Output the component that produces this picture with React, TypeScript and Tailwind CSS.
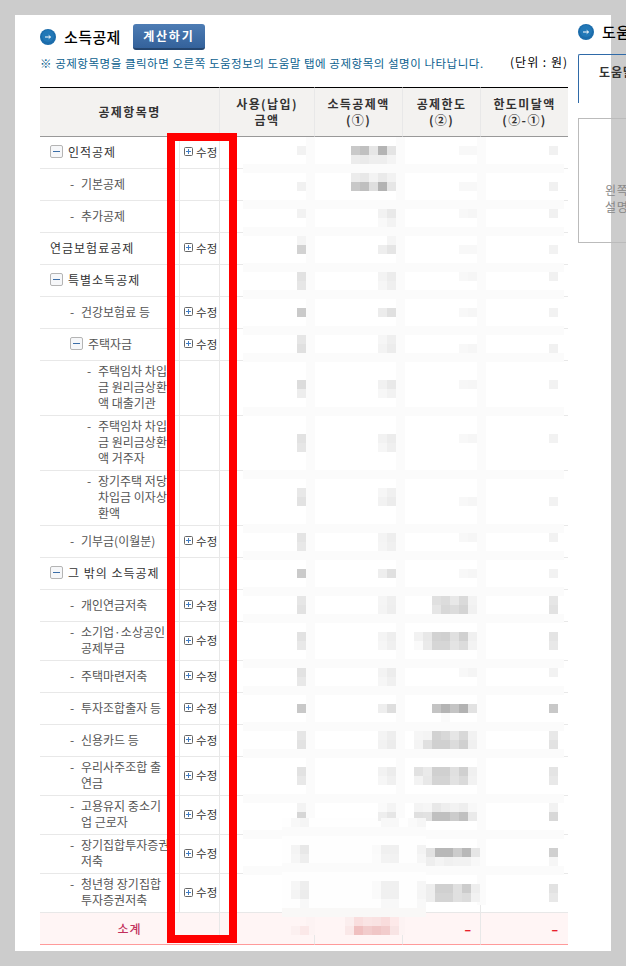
import React from 'react';

interface DeductionRow {
    label: string[];
    level: number;
    toggle?: boolean;
    edit?: boolean;
}

const rows: DeductionRow[] = [
    { label: ['인적공제'], level: 0, toggle: true, edit: true },
    { label: ['기본공제'], level: 1 },
    { label: ['추가공제'], level: 1 },
    { label: ['연금보험료공제'], level: 0, edit: true },
    { label: ['특별소득공제'], level: 0, toggle: true },
    { label: ['건강보험료 등'], level: 1, edit: true },
    { label: ['주택자금'], level: 2, toggle: true, edit: true },
    { label: ['주택임차 차입', '금 원리금상환', '액 대출기관'], level: 3 },
    { label: ['주택임차 차입', '금 원리금상환', '액 거주자'], level: 3 },
    { label: ['장기주택 저당', '차입금 이자상', '환액'], level: 3 },
    { label: ['기부금(이월분)'], level: 1, edit: true },
    { label: ['그 밖의 소득공제'], level: 0, toggle: true },
    { label: ['개인연금저축'], level: 1, edit: true },
    { label: ['소기업·소상공인', '공제부금'], level: 1, edit: true },
    { label: ['주택마련저축'], level: 1, edit: true },
    { label: ['투자조합출자 등'], level: 1, edit: true },
    { label: ['신용카드 등'], level: 1, edit: true },
    { label: ['우리사주조합 출', '연금'], level: 1, edit: true },
    { label: ['고용유지 중소기', '업 근로자'], level: 1, edit: true },
    { label: ['장기집합투자증권', '저축'], level: 1, edit: true },
    { label: ['청년형 장기집합', '투자증권저축'], level: 1, edit: true },
];

const rowHeight: Record<number, string> = { 1: 'h-[32px]', 2: 'h-[39px]', 3: 'h-[55px]' };
const rowIndent: Record<number, string> = { 0: 'pl-[10px]', 1: 'pl-[30px]', 2: 'pl-[30px]', 3: 'pl-[47px]' };

// pixelated part of the screenshot: [y, x, colours] in page coordinates, one 9px block per colour
const mosaic: [number, number, string[]][] = [
    [146, 297, ['f2']], [146, 351, ['c9', 'c0', 'e6', 'b4', 'e4']], [146, 459, ['f8', 'f8']], [146, 549, ['f1']],
    [155, 351, ['ec', 'ea', 'ee', 'ee', 'f4']],
    [173, 351, ['ec', 'e8', 'f3', 'ea', 'f2']],
    [182, 297, ['f1']], [182, 351, ['c8', 'bf', 'df', 'b3', 'e6']], [182, 459, ['f8', 'f8']], [182, 549, ['f1']],
    [209, 297, ['f2']], [209, 378, ['f2', 'e9']], [209, 459, ['f8', 'f6']], [209, 549, ['f1']],
    [218, 378, ['f9', 'f3']],
    [236, 297, ['f4']], [236, 387, ['f5']],
    [245, 297, ['d2']], [245, 378, ['ee', 'e5']], [245, 459, ['f8', 'f8']], [245, 549, ['f2']],
    [272, 297, ['e2']], [272, 378, ['f3', 'ec']], [272, 459, ['f8', 'f6']], [272, 549, ['f1']],
    [281, 297, ['e6']], [281, 378, ['f6', 'ef']],
    [308, 297, ['ca']], [308, 378, ['ec', 'e0']], [308, 459, ['f8', 'f6']], [308, 549, ['f2']],
    [335, 297, ['e6']], [335, 378, ['f6', 'ef']],
    [344, 297, ['e0']], [344, 378, ['f3', 'ec']], [344, 459, ['f8', 'f6']], [344, 549, ['f1']],
    [380, 297, ['dc']], [380, 378, ['f1', 'e9']], [380, 459, ['f7', 'f6']], [380, 549, ['f2']],
    [389, 297, ['ed']], [389, 378, ['f7', 'f2']],
    [434, 297, ['e2']], [434, 378, ['f2', 'ec']], [434, 459, ['f8', 'f6']], [434, 549, ['f2']],
    [443, 297, ['e6']], [443, 378, ['f6', 'ef']],
    [488, 297, ['e8']], [488, 378, ['f6', 'f0']],
    [497, 297, ['e2']], [497, 378, ['f2', 'ec']], [497, 459, ['f8', 'f6']], [497, 549, ['f2']],
    [533, 297, ['e4']], [533, 378, ['f4', 'ee']], [533, 459, ['f8', 'f6']], [533, 549, ['f2']],
    [542, 297, ['e8']], [542, 378, ['f5', 'f0']],
    [569, 297, ['ca']], [569, 378, ['ee', 'e0']], [569, 459, ['f8', 'f6']], [569, 549, ['f2']],
    [596, 297, ['e6']], [596, 378, ['f5', 'ef']], [596, 432, ['e0', 'dc', 'e8', 'da', 'f3']], [596, 549, ['e6']],
    [605, 297, ['e2']], [605, 378, ['f4', 'ee']], [605, 432, ['e6', 'd8', 'dc', 'd4', 'f1']], [605, 549, ['e2']],
    [632, 297, ['e2']], [632, 378, ['f4', 'ee']], [632, 414, ['f2', 'e8', 'd2', 'd0', 'e0', 'd0', 'f0']], [632, 549, ['e4']],
    [641, 297, ['e8']], [641, 378, ['f6', 'f0']], [641, 414, ['fa', 'ea', 'd6', 'd6', 'e4', 'dc', 'f3']], [641, 549, ['e8']],
    [668, 297, ['e2']], [668, 378, ['f3', 'ec']], [668, 459, ['f8', 'f5']], [668, 549, ['f2']],
    [677, 297, ['e8']], [677, 378, ['f6', 'f0']],
    [704, 297, ['c8']], [704, 378, ['ee', 'de']], [704, 432, ['c4', 'b4', 'c4', 'b2', 'e2']], [704, 549, ['c8']],
    [713, 441, ['fa']],
    [731, 297, ['e6']], [731, 378, ['f4', 'ee']], [731, 414, ['f6', 'f4', 'd2', 'd8', 'e6', 'd8', 'f2']], [731, 549, ['e8']],
    [740, 297, ['e2']], [740, 378, ['f2', 'ec']], [740, 414, ['f4', 'e0', 'd0', 'd0', 'dc', 'd0', 'f0']], [740, 549, ['e2']],
    [767, 297, ['e2']], [767, 378, ['f2', 'ec']], [767, 414, ['e2', 'ea', 'd0', 'd0', 'e0', 'd0', 'f0']], [767, 549, ['e4']],
    [776, 297, ['e8']], [776, 378, ['f6', 'f0']], [776, 414, ['f3', 'e8', 'd4', 'd4', 'e2', 'da', 'f2']], [776, 549, ['e8']],
    [803, 297, ['f3']], [803, 378, ['fa', 'f4']], [803, 414, ['f4', 'f6', 'e8', 'ee', 'f2', 'ee', 'f8']], [803, 549, ['f2']],
    [812, 297, ['d6']], [812, 378, ['ee', 'e6']], [812, 414, ['e0', 'e2', 'c0', 'c0', 'cc', 'c0', 'ea']], [812, 549, ['d8']],
    [848, 426, ['e2', 'b8', 'b8', 'cc', 'b8', 'e6']], [848, 549, ['d0']],
    [857, 426, ['ee', 'f4', 'f0', 'f2', 'f2', 'f8']], [857, 549, ['f6']],
    [884, 426, ['ee', 'd0', 'd0', 'e0', 'cc', 'ee']], [884, 549, ['e2']],
    [893, 426, ['ee', 'd4', 'd4', 'e0', 'dc', 'f2']], [893, 549, ['e8']],
    [818, 291, ['f8', 'f5']], [818, 381, ['f8', 'f8']], [818, 408, ['fa', 'f6']],
    [845, 291, ['f4', 'e8']], [845, 372, ['fa', 'f0', 'f0']], [845, 417, ['f3']],
    [854, 291, ['f6', 'ee']], [854, 372, ['fb', 'f3', 'f2']], [854, 417, ['f6']],
    [881, 291, ['f6', 'ee']], [881, 372, ['fa', 'f0', 'f0']], [881, 417, ['f6']],
    [890, 291, ['f4', 'ec']], [890, 372, ['fa', 'f0', 'f0']], [890, 417, ['f5']],
    [899, 300, ['f8']], [899, 381, ['f8', 'f8']], [899, 417, ['f8']],
];

const pinkMosaic: [number, number, string[]][] = [
    [917, 345, ['#fbeeee', '#f9dede', '#fae4e4', '#f9e2e2', '#f9dcdc', '#fde9e9']],
    [926, 291, ['#fcf0f0', '#fbe8e8']],
    [926, 345, ['#fae8e8', '#f0c0c0', '#f2cccc', '#f0c6c6', '#f2cccc', '#f8e4e4']],
];

const bandTops = [164, 200, 227, 263, 290, 326, 353, 407, 470, 524, 551, 587, 614, 659, 686, 722, 749, 794, 830, 866];

function ArrowBullet() {
    return (
        <svg width="16" height="16" viewBox="0 0 16 16" className="shrink-0">
            <circle cx="8" cy="8" r="8" fill="#1b6cab" />
            <circle cx="8" cy="7" r="6" fill="#2a84c4" opacity="0.5" />
            <path d="M5 8h5.5M8.7 6.4l1.8 1.6-1.8 1.6" fill="none" stroke="#fff" strokeWidth="1" />
        </svg>
    );
}

function MinusBox() {
    return (
        <svg width="13" height="13" viewBox="0 0 13 13" className="shrink-0">
            <rect x="0.5" y="0.5" width="12" height="12" rx="1.5" fill="#f6f7f9" stroke="#b4b4b4" />
            <path d="M3 6.5h7" stroke="#3b6ea8" strokeWidth="1" />
        </svg>
    );
}

function PlusBox() {
    return (
        <svg width="9" height="9" viewBox="0 0 9 9" className="shrink-0">
            <rect x="0.5" y="0.5" width="8" height="8" rx="1" fill="#fff" stroke="#666" />
            <path d="M2 4.5h5M4.5 2v5" stroke="#3f7cc4" strokeWidth="1" />
        </svg>
    );
}

function Mosaic() {
    return (
        <svg width="626" height="966" viewBox="0 0 626 966" className="absolute left-0 top-0 pointer-events-none" shapeRendering="crispEdges">
            {bandTops.map((y) => (
                <rect key={y} x="243" y={y} width="321" height="9" fill="#fbfbfb" />
            ))}
            {[306, 396, 477].map((x) => (
                <rect key={x} x={x} y="137" width="9" height="768" fill="#fbfbfb" />
            ))}
            <rect x="282" y="818" width="144" height="90" fill="#fefefe" />
            <rect x="282" y="827" width="144" height="9" fill="#fbfbfb" />
            <rect x="282" y="863" width="144" height="9" fill="#fbfbfb" />
            <rect x="306" y="913" width="9" height="22" fill="#fdf3f3" />
            <rect x="396" y="913" width="9" height="22" fill="#fdf3f3" />
            <rect x="282" y="908" width="144" height="9" fill="#f9f8f7" />
            {mosaic.flatMap(([y, x, colours]) =>
                colours.map((c, i) => <rect key={`${y}-${x}-${i}`} x={x + i * 9} y={y} width="9" height="9" fill={`#${c}${c}${c}`} />),
            )}
            {pinkMosaic.flatMap(([y, x, colours]) =>
                colours.map((c, i) => <rect key={`${y}-${x}-${i}`} x={x + i * 9} y={y} width="9" height="9" fill={c} />),
            )}
        </svg>
    );
}

function RowLabel({ row }: { row: DeductionRow }) {
    const dark = row.level === 0;
    return (
        <div className={`flex items-start whitespace-nowrap ${rowIndent[row.level]} ${dark ? 'tracking-[1px] text-[#333]' : 'tracking-normal text-[#555]'}`}>
            {row.toggle && (
                <span className="flex h-[16px] w-[18px] items-center">
                    <MinusBox />
                </span>
            )}
            {!row.toggle && row.level > 0 && <span className="w-[11px]">-</span>}
            <div>
                {row.label.map((line) => (
                    <div key={line}>{line}</div>
                ))}
            </div>
        </div>
    );
}

export default function App() {
    const font = { fontFamily: '"Noto Sans CJK KR", "Noto Sans", sans-serif' };
    const th = 'border-r border-t border-b border-r-[#e8e8e8] border-t-black border-b-[#999] font-bold text-[#333] leading-[16px] tracking-[1.4px] align-middle';
    const td = 'border-b border-[#e8e8e8]';
    const totalCell = 'border-r border-b border-r-[#e8e8e8] border-b-[#ff9a9a]';

    return (
        <div className="relative h-[966px] w-[626px] overflow-hidden bg-[#cccccc] text-[12px] leading-[16px]" style={font}>
            <div className="ml-[15px] mt-[15px] flex h-[936px] w-[596px] bg-white pt-[9px]">
                <div className="ml-[25px] w-[528px] shrink-0">
                    <div className="flex h-[26px] items-center">
                        <ArrowBullet />
                        <h2 className="ml-[8px] text-[15px] font-medium tracking-[0.4px] text-black">소득공제</h2>
                        <button className="ml-[12px] h-[26px] w-[72px] rounded-[3px] border-b-2 border-[#24456e] bg-gradient-to-b from-[#4d7cb4] to-[#34629b] text-[12px] font-bold tracking-[1.8px] text-white">
                            계산하기
                        </button>
                    </div>
                    <div className="mt-[3px] flex h-[34px] items-start justify-between">
                        <p className="mt-[2px] whitespace-nowrap text-[11.5px] tracking-[0.53px] text-[#0b5f8f]">
                            ※ 공제항목명을 클릭하면 오른쪽 도움정보의 도움말 탭에 공제항목의 설명이 나타납니다.
                        </p>
                        <span className="mt-px whitespace-nowrap tracking-[1px] text-black">(단위 : 원)</span>
                    </div>
                    <table className="w-[528px] table-fixed border-separate border-spacing-0">
                        <colgroup>
                            <col className="w-[140px]" />
                            <col className="w-[40px]" />
                            <col className="w-[95px]" />
                            <col className="w-[88px]" />
                            <col className="w-[78px]" />
                            <col className="w-[87px]" />
                        </colgroup>
                        <thead>
                            <tr className="h-[50px] bg-[#f3f2f0]">
                                <th colSpan={2} className={th}>공제항목명</th>
                                <th className={th}>사용(납입)<br />금액</th>
                                <th className={th}>소득공제액<br />(①)</th>
                                <th className={th}>공제한도<br />(②)</th>
                                <th className={`${th} border-r-0`}>한도미달액<br />(②-①)</th>
                            </tr>
                        </thead>
                        <tbody>
                            {rows.map((row) => (
                                <tr key={row.label.join('') + row.level} className={rowHeight[row.label.length]}>
                                    <td className={`${td} border-r pb-[2px] align-middle`}>
                                        <RowLabel row={row} />
                                    </td>
                                    <td className={`${td} border-r pb-[2px] align-middle`}>
                                        {row.edit && (
                                            <div className="flex items-center pl-[4px] text-[11.5px] tracking-[0.2px] text-[#333]">
                                                <PlusBox />
                                                <span className="ml-[3px] whitespace-nowrap">수정</span>
                                            </div>
                                        )}
                                    </td>
                                    <td className={`${td} border-r`} />
                                    <td className={`${td} border-r`} />
                                    <td className={`${td} border-r`} />
                                    <td className={td} />
                                </tr>
                            ))}
                            <tr className="h-[32px] bg-[#fff5f5]">
                                <td colSpan={2} className={`${totalCell} text-center font-medium tracking-[1px] text-[#c2305c]`}>소계</td>
                                <td className={totalCell} />
                                <td className={totalCell} />
                                <td className={`${totalCell} pr-[9px] text-right font-black text-[#e8202c]`}>–</td>
                                <td className="border-b border-b-[#ff9a9a] pr-[10px] text-right font-black text-[#e8202c]">–</td>
                            </tr>
                        </tbody>
                    </table>
                </div>
                <div className="ml-[10px] w-[200px] shrink-0">
                    <div className="flex h-[16px] items-center">
                        <ArrowBullet />
                        <h2 className="ml-[8px] whitespace-nowrap text-[15px] font-medium tracking-[0.4px] text-black">도움정보</h2>
                    </div>
                    <div className="mt-[14px] h-[49px] rounded-tl-[2px] border-l border-t border-[#2f6aa8] pl-[20px] pt-[9px] font-bold tracking-[1px] text-[#333]">
                        도움말
                    </div>
                    <div className="mt-[15px] h-[125px] border border-[#bbbbbb] pl-[26px] pt-[63px] tracking-[0.6px] text-[#888]">
                        <div className="whitespace-nowrap">왼쪽에서 공제항목명을</div>
                        <div className="whitespace-nowrap pt-px">설명이 나타납니다.</div>
                    </div>
                </div>
            </div>
            <Mosaic />
            <div className="pointer-events-none absolute left-[167px] top-[133px] h-[810px] w-[70px] border-8 border-[#ff0000]" />
        </div>
    );
}
